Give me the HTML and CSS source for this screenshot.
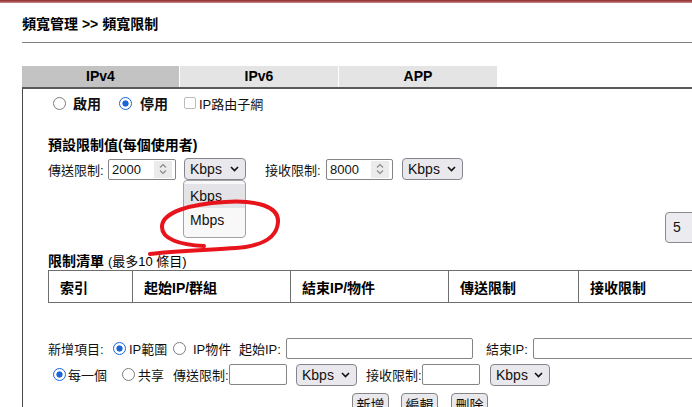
FILE: index.html
```html
<!DOCTYPE html>
<html lang="zh-Hant">
<head>
<meta charset="utf-8">
<title>頻寬限制</title>
<link rel="stylesheet" href="styles.css">
</head>
<body>
<div class="topbar"></div>
<div class="page">
  <div class="title">頻寬管理 &gt;&gt; 頻寬限制</div>
  <div class="rule"></div>
  <div class="tabs">
    <div class="tab active w157">IPv4</div>
    <div class="tab w158">IPv6</div>
    <div class="tab w158">APP</div>
  </div>
  <div class="panel">
    <div class="row mode">
      <span class="radio ml5"></span><b class="ml7">啟用</b>
      <span class="radio on ml18"></span><b class="ml8">停用</b>
      <span class="check ml16"></span><span class="ml3">IP路由子網</span>
    </div>

    <div class="heading h1">預設限制值(每個使用者)</div>

    <div class="row limit">
      <span class="lbl w60">傳送限制:</span>
      <div class="num w68"><span class="val">2000</span><span class="spin"><svg width="10" height="14" viewBox="0 0 10 14"><path d="M2 5.5 L5 2.5 L8 5.5" fill="none" stroke="#8a8a8a" stroke-width="1.2"/><path d="M2 8.5 L5 11.5 L8 8.5" fill="none" stroke="#8a8a8a" stroke-width="1.2"/></svg></span></div>
      <div class="sel ml8 w62 open">
        <span>Kbps</span>
        <svg class="chev" width="9" height="6" viewBox="0 0 9 6"><path d="M1 1 L4.5 4.5 L8 1" fill="none" stroke="#111" stroke-width="1.6"/></svg>
        <div class="drop">
          <div class="opt hi">Kbps</div>
          <div class="opt">Mbps</div>
        </div>
      </div>
      <span class="lbl ml19 w61">接收限制:</span>
      <div class="num w67"><span class="val">8000</span><span class="spin"><svg width="10" height="14" viewBox="0 0 10 14"><path d="M2 5.5 L5 2.5 L8 5.5" fill="none" stroke="#8a8a8a" stroke-width="1.2"/><path d="M2 8.5 L5 11.5 L8 8.5" fill="none" stroke="#8a8a8a" stroke-width="1.2"/></svg></span></div>
      <div class="sel ml9 w61">
        <span>Kbps</span>
        <svg class="chev" width="9" height="6" viewBox="0 0 9 6"><path d="M1 1 L4.5 4.5 L8 1" fill="none" stroke="#111" stroke-width="1.6"/></svg>
      </div>
    </div>

    <div class="row five">
      <div class="btn5">5</div>
    </div>

    <div class="heading h2">限制清單 <span class="normal">(最多10 條目)</span></div>

    <table class="list">
      <tr>
        <th class="c1">索引</th>
        <th class="c2">起始IP/群組</th>
        <th class="c2">結束IP/物件</th>
        <th class="c3">傳送限制</th>
        <th class="c3">接收限制</th>
      </tr>
    </table>

    <div class="row add1">
      <span class="lbl w65">新增項目:</span>
      <span class="radio on"></span><span class="lbl ml3 w44">IP範圍</span>
      <span class="radio"></span><span class="lbl ml7 w46">IP物件</span>
      <span class="lbl w47">起始IP:</span>
      <div class="txt w187"></div>
      <span class="lbl ml13 w47">結束IP:</span>
      <div class="txt w200"></div>
    </div>

    <div class="row add2">
      <span class="radio on ml5"></span><span class="lbl ml2 w54">每一個</span>
      <span class="radio"></span><span class="lbl ml3 w35">共享</span>
      <span class="lbl w56">傳送限制:</span>
      <div class="txt w58"></div>
      <div class="sel ml9 w61">
        <span>Kbps</span>
        <svg class="chev" width="9" height="6" viewBox="0 0 9 6"><path d="M1 1 L4.5 4.5 L8 1" fill="none" stroke="#111" stroke-width="1.6"/></svg>
      </div>
      <span class="lbl ml9 w56">接收限制:</span>
      <div class="txt w58"></div>
      <div class="sel ml10 w60">
        <span>Kbps</span>
        <svg class="chev" width="9" height="6" viewBox="0 0 9 6"><path d="M1 1 L4.5 4.5 L8 1" fill="none" stroke="#111" stroke-width="1.6"/></svg>
      </div>
    </div>

    <div class="row btns">
      <div class="btn">新增</div>
      <div class="btn">編輯</div>
      <div class="btn">刪除</div>
    </div>
  </div>
</div>
<svg class="scribble" width="692" height="407" viewBox="0 0 692 407">
  <path d="M204 246 C180 245 161 239 162 226 C163 212 190 204 225 202 C256 200 279 206 278 222 C277 238 262 246 236 248 C210 250 182 250 150 254" fill="none" stroke="#e8141c" stroke-width="4" stroke-linecap="round" stroke-linejoin="round"/>
</svg>
</body>
</html>
```

FILE: styles.css
```css
html, body {
  margin: 0;
  padding: 0;
  overflow: hidden;
  background: #fff;
}
body {
  width: 692px;
  height: 407px;
  position: relative;
  font-family: "Liberation Sans", "Noto Sans CJK TC", sans-serif;
  font-size: 13px;
  color: #111;
}
.topbar {
  height: 3px;
  background: linear-gradient(to bottom, #8a2727, #c98a86);
}
.page {
  padding-left: 22px;
  width: 900px;
}
.title {
  margin-top: 13px;
  font-size: 14px;
  font-weight: bold;
  line-height: 16px;
  color: #000;
}
.rule {
  margin-top: 10px;
  height: 1px;
  background: #808080;
}
.tabs {
  margin-top: 23px;
  display: flex;
  gap: 1px;
  height: 21px;
}
.tab {
  background: #e4e4e4;
  font-size: 14px;
  font-weight: bold;
  line-height: 21px;
  text-align: center;
  color: #000;
}
.tab.active { background: #c3c3c3; }
.w157 { width: 157px; }
.w158 { width: 158px; }

.panel {
  border-top: 2px solid #5a5a5a;
  border-left: 1px solid #4a4a4a;
  padding-left: 25px;
  height: 400px;
}
.row {
  display: flex;
  align-items: center;
  white-space: nowrap;
}
.mode { margin-top: 4px; height: 20px; }
.mode b { font-size: 14px; }
.heading {
  font-size: 14px;
  font-weight: bold;
  line-height: 16px;
  color: #000;
}
.heading .normal { font-weight: normal; font-size: 13px; }
.h1 { margin-top: 24px; }
.limit { margin-top: 5px; height: 22px; }
.five { margin-top: 32px; height: 31px; }
.h2 { margin-top: 10px; }
.add1 { margin-top: 35px; height: 21px; }
.add2 { margin-top: 5px; height: 21px; }
.btns { margin-top: 8px; gap: 12px; padding-left: 304px; }

.lbl { display: inline-block; flex: none; }

.radio {
  flex: none;
  width: 13px;
  height: 13px;
  box-sizing: border-box;
  border: 1.5px solid #7d7d7d;
  border-radius: 50%;
  background: #fff;
}
.radio.on {
  border: 1.8px solid #1a66d6;
  background: radial-gradient(circle, #1a66d6 0 2.8px, #fff 3.4px);
}
.check {
  flex: none;
  width: 12px;
  height: 12px;
  box-sizing: border-box;
  border: 1px solid #bcbcbc;
  border-radius: 2px;
  background: #fff;
}

.num {
  flex: none;
  height: 21px;
  box-sizing: border-box;
  border: 1px solid #858585;
  border-radius: 2px;
  display: flex;
  align-items: center;
  justify-content: space-between;
  padding: 0 3px 0 3px;
  background: #fff;
}
.num .val { font-size: 13px; }
.spin {
  width: 18px;
  height: 17px;
  background: #ebebeb;
  display: flex;
  align-items: center;
  justify-content: center;
}
.txt {
  flex: none;
  height: 21px;
  box-sizing: border-box;
  border: 1px solid #858585;
  border-radius: 2px;
  background: #fff;
}
.sel {
  flex: none;
  position: relative;
  height: 22px;
  box-sizing: border-box;
  border: 1px solid #85858f;
  border-radius: 4px;
  background: #e9e9ed;
  display: flex;
  align-items: center;
  justify-content: space-between;
  padding: 0 6px 0 5px;
  font-size: 14px;
}
.drop {
  position: absolute;
  top: 21px;
  left: -2px;
  width: 63px;
  box-sizing: border-box;
  border: 1px solid #a2a2a2;
  border-radius: 4px;
  background: #f8f8f8;
  padding: 3px 0 5px 0;
  z-index: 2;
}
.opt {
  height: 24px;
  line-height: 24px;
  padding-left: 6px;
  font-size: 14px;
}
.opt.hi { background: #e4e4e8; }

.btn5 {
  flex: none;
  margin-left: 617px;
  width: 40px;
  height: 31px;
  box-sizing: border-box;
  border: 1px solid #8a8a8a;
  border-radius: 4px;
  background: #ececf0;
  padding-left: 7px;
  line-height: 29px;
  font-size: 14px;
}

.list {
  border-collapse: collapse;
  table-layout: fixed;
  width: 660px;
}
.list th {
  border: 1px solid #6e6e6e;
  height: 32px;
  box-sizing: border-box;
  padding: 0 0 0 11px;
  text-align: left;
  font-size: 14px;
  font-weight: bold;
  color: #000;
}
.c1 { width: 84px; }
.c2 { width: 158px; }
.c3 { width: 130px; }

.btn {
  flex: none;
  width: 37px;
  height: 24px;
  box-sizing: border-box;
  border: 1px solid #858585;
  border-radius: 4px;
  background: #e9e9ed;
  text-align: center;
  line-height: 22px;
  font-size: 14px;
}
.btn + .btn + .btn { margin-left: 1px; }

.scribble {
  position: absolute;
  left: 0;
  top: 0;
  pointer-events: none;
  z-index: 5;
}

.ml2 { margin-left: 2px; }
.ml3 { margin-left: 3px; }
.ml5 { margin-left: 5px; }
.ml7 { margin-left: 7px; }
.ml8 { margin-left: 8px; }
.ml9 { margin-left: 9px; }
.ml10 { margin-left: 10px; }
.ml13 { margin-left: 13px; }
.ml16 { margin-left: 16px; }
.ml18 { margin-left: 18px; }
.ml19 { margin-left: 19px; }
.w35 { width: 35px; }
.w44 { width: 44px; }
.w46 { width: 46px; }
.w47 { width: 47px; }
.w54 { width: 54px; }
.w56 { width: 56px; }
.w58 { width: 58px; }
.w60 { width: 60px; }
.w61 { width: 61px; }
.w62 { width: 62px; }
.w65 { width: 65px; }
.w67 { width: 67px; }
.w68 { width: 68px; }
.w187 { width: 187px; }
.w200 { width: 200px; }
```
